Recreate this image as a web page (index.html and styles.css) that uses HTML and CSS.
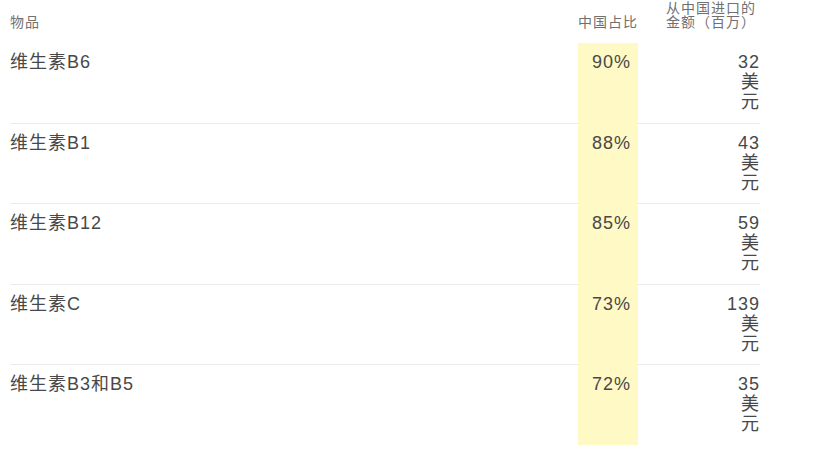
FILE: index.html
```html
<!DOCTYPE html>
<html lang="zh-CN">
<head>
<meta charset="utf-8">
<title>维生素进口</title>
<link rel="stylesheet" href="styles.css">
</head>
<body>
<table class="data">
  <thead>
    <tr>
      <th class="name">物品</th>
      <th class="pct">中国占比</th>
      <th class="amt">从中国进口的金额（百万）</th>
    </tr>
  </thead>
  <tbody>
    <tr>
      <td class="name">维生素B6</td>
      <td class="pct">90%</td>
      <td class="amt"><span class="val">32</span><span class="val">美</span><span class="val">元</span></td>
    </tr>
    <tr>
      <td class="name">维生素B1</td>
      <td class="pct">88%</td>
      <td class="amt"><span class="val">43</span><span class="val">美</span><span class="val">元</span></td>
    </tr>
    <tr>
      <td class="name">维生素B12</td>
      <td class="pct">85%</td>
      <td class="amt"><span class="val">59</span><span class="val">美</span><span class="val">元</span></td>
    </tr>
    <tr>
      <td class="name">维生素C</td>
      <td class="pct">73%</td>
      <td class="amt"><span class="val">139</span><span class="val">美</span><span class="val">元</span></td>
    </tr>
    <tr>
      <td class="name">维生素B3和B5</td>
      <td class="pct">72%</td>
      <td class="amt"><span class="val">35</span><span class="val">美</span><span class="val">元</span></td>
    </tr>
  </tbody>
</table>
</body>
</html>
```

FILE: styles.css
```css
html, body {
  margin: 0;
  padding: 0;
  background: #ffffff;
}

body {
  font-family: "Liberation Sans", "Noto Sans CJK SC", sans-serif;
  color: #444444;
  letter-spacing: 1px;
}

.data {
  margin-left: 10px;
  width: 750px;
  border-collapse: separate;
  border-spacing: 0;
  table-layout: fixed;
}

.data th {
  font-size: 14px;
  line-height: 14px;
  font-weight: normal;
  color: #707070;
  vertical-align: bottom;
  padding: 1px 0 14px 0;
}

.data th.name { text-align: left; }
.data th.pct {
  width: 60px;
  text-align: right;
  padding-right: 0;
}
.data th.amt {
  width: 94px;
  padding-left: 28px;
  text-align: left;
}

.data td {
  font-size: 18px;
  line-height: 20px;
  vertical-align: top;
  padding: 9px 0 10.5px 0;
  color: #484848;
}

.data tbody tr:not(:last-child) td.name,
.data tbody tr:not(:last-child) td.amt {
  border-bottom: 1px solid #ececec;
}

.data td.name {
  text-align: left;
}

.data td.pct {
  background: #fff9c5;
  text-align: right;
  padding-right: 7px;
}

.data td.amt {
  text-align: right;
}

.val {
  display: block;
}
```
